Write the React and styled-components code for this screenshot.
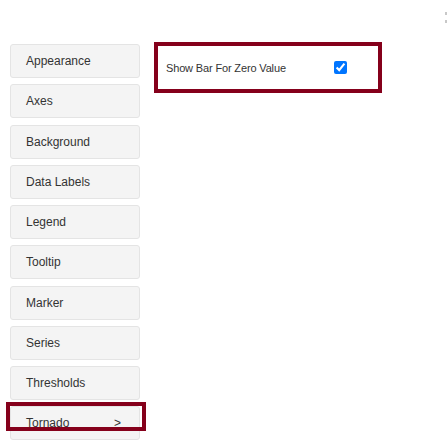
import React from 'react'
import styled, { createGlobalStyle } from 'styled-components'

const GlobalStyle = createGlobalStyle`
  body {
    margin: 0;
    background: #ffffff;
    font-family: Arial, "Liberation Sans", sans-serif;
  }
`

const Page = styled.div`
  position: relative;
  width: 447px;
  height: 446px;
  display: flex;
  align-items: flex-start;
  gap: 14px;
  padding: 42px 0 0 10px;
  box-sizing: border-box;
  overflow: hidden;
`

const Sidebar = styled.div`
  width: 130px;
  display: flex;
  flex-direction: column;
  gap: 6.25px;
  padding-top: 2px;
`

const NavWrap = styled.div`
  position: relative;
`

const NavButton = styled.div`
  height: 34px;
  box-sizing: border-box;
  display: flex;
  align-items: center;
  justify-content: space-between;
  padding: 0 18px 0 15px;
  background: #f4f4f4;
  border: 1px solid #e4e4e4;
  border-radius: 3px;
  color: #333;
  font-size: 12px;
`

const Highlight = styled.div`
  position: absolute;
  left: -4px;
  top: -4px;
  width: 140px;
  height: 29px;
  box-sizing: border-box;
  border: 4px solid #85001b;
`

const Panel = styled.div`
  width: 228px;
  height: 51px;
  box-sizing: border-box;
  border: 4px solid #85001b;
  display: flex;
  align-items: center;
  padding-left: 8px;
`

const OptionLabel = styled.span`
  width: 168px;
  color: #333;
  font-size: 11px;
  letter-spacing: -0.15px;
`

const Check = styled.input`
  margin: 0;
  width: 13px;
  height: 13px;
  accent-color: #0075ff;
`

const Dots = styled.div`
  position: absolute;
  right: 0;
  top: 12px;
  display: flex;
  flex-direction: column;
  gap: 5px;
`

const Dot = styled.span`
  width: 2px;
  height: 3px;
  background: #c8c8c8;
`

const items = [
  'Appearance',
  'Axes',
  'Background',
  'Data Labels',
  'Legend',
  'Tooltip',
  'Marker',
  'Series',
  'Thresholds',
]

export default function App() {
  return (
    <Page>
      <GlobalStyle />
      <Sidebar>
        {items.map((label) => (
          <NavButton key={label}>{label}</NavButton>
        ))}
        <NavWrap>
          <NavButton>
            <span>Tornado</span>
            <span>&gt;</span>
          </NavButton>
          <Highlight />
        </NavWrap>
      </Sidebar>
      <Panel>
        <OptionLabel>Show Bar For Zero Value</OptionLabel>
        <Check type="checkbox" checked readOnly />
      </Panel>
      <Dots>
        <Dot />
        <Dot />
      </Dots>
    </Page>
  )
}
